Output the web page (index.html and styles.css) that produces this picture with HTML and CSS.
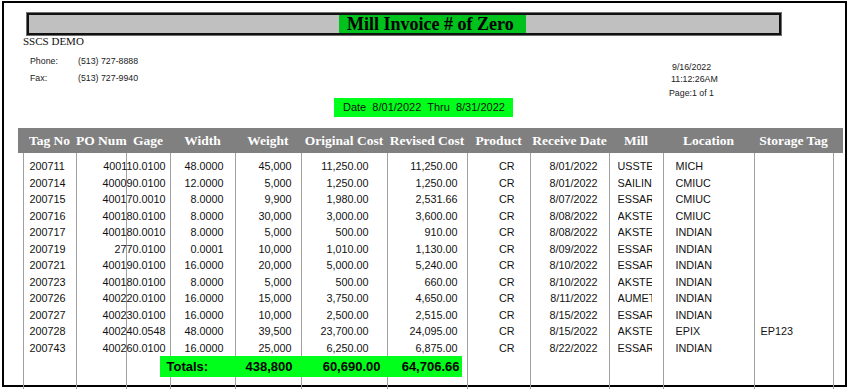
FILE: index.html
```html
<!DOCTYPE html>
<html lang="en">
<head>
    <meta charset="UTF-8">
    <meta name="viewport" content="width=device-width, initial-scale=1.0">
    <title>Mill Invoice</title>
    <link rel="stylesheet" href="styles.css">
</head>
<body>
    <div class="page">
        <div class="title-bar">
            <h1 class="title">Mill Invoice # of Zero</h1>
        </div>

        <div class="info">
            <div class="company">
                <div class="company-name">SSCS DEMO</div>
                <div class="contact">
                    <span>Phone:</span><span>(513) 727-8888</span>
                    <span>Fax:</span><span>(513) 727-9940</span>
                </div>
            </div>
            <div class="stamp">
                <div class="stamp-date">9/16/2022</div>
                <div class="stamp-time">11:12:26AM</div>
                <div class="stamp-page">Page:1 of 1</div>
            </div>
        </div>

        <div class="period">Date&nbsp; 8/01/2022&nbsp; Thru&nbsp; 8/31/2022</div>

        <table class="report">
            <colgroup>
                <col class="c-gutter-l">
                <col class="c-tag">
                <col class="c-po">
                <col class="c-gage">
                <col class="c-width">
                <col class="c-weight">
                <col class="c-orig">
                <col class="c-rev">
                <col class="c-prod">
                <col class="c-recv">
                <col class="c-mill">
                <col class="c-loc">
                <col class="c-store">
                <col class="c-gutter-r">
            </colgroup>
            <thead>
                <tr>
                    <th></th>
                    <th>Tag No</th>
                    <th>PO Num</th>
                    <th>Gage</th>
                    <th>Width</th>
                    <th>Weight</th>
                    <th>Original Cost</th>
                    <th>Revised Cost</th>
                    <th>Product</th>
                    <th>Receive Date</th>
                    <th>Mill</th>
                    <th>Location</th>
                    <th>Storage Tag</th>
                    <th></th>
                </tr>
            </thead>
            <tbody>
                <tr class="spacer">
                    <td class="gutter"></td><td></td><td></td><td></td><td></td><td></td><td></td><td></td><td></td><td></td><td></td><td></td><td></td><td class="gutter"></td>
                </tr>
                <tr>
                    <td class="gutter"></td>
                    <td class="tag">200711</td><td class="po"><span>40011</span></td><td class="gage">0.0100</td>
                    <td class="width">48.0000</td><td class="weight">45,000</td>
                    <td class="orig">11,250.00</td><td class="rev">11,250.00</td>
                    <td class="prod">CR</td><td class="recv">8/01/2022</td>
                    <td class="mill"><span>USSTE</span></td><td class="loc"><span>MICH</span></td>
                    <td class="store"></td>
                    <td class="gutter"></td>
                </tr>
                <tr>
                    <td class="gutter"></td>
                    <td class="tag">200714</td><td class="po"><span>40009</span></td><td class="gage">0.0100</td>
                    <td class="width">12.0000</td><td class="weight">5,000</td>
                    <td class="orig">1,250.00</td><td class="rev">1,250.00</td>
                    <td class="prod">CR</td><td class="recv">8/01/2022</td>
                    <td class="mill"><span>SAILIN</span></td><td class="loc"><span>CMIUC</span></td>
                    <td class="store"></td>
                    <td class="gutter"></td>
                </tr>
                <tr>
                    <td class="gutter"></td>
                    <td class="tag">200715</td><td class="po"><span>40017</span></td><td class="gage">0.0010</td>
                    <td class="width">8.0000</td><td class="weight">9,900</td>
                    <td class="orig">1,980.00</td><td class="rev">2,531.66</td>
                    <td class="prod">CR</td><td class="recv">8/07/2022</td>
                    <td class="mill"><span>ESSAR</span></td><td class="loc"><span>CMIUC</span></td>
                    <td class="store"></td>
                    <td class="gutter"></td>
                </tr>
                <tr>
                    <td class="gutter"></td>
                    <td class="tag">200716</td><td class="po"><span>40018</span></td><td class="gage">0.0100</td>
                    <td class="width">8.0000</td><td class="weight">30,000</td>
                    <td class="orig">3,000.00</td><td class="rev">3,600.00</td>
                    <td class="prod">CR</td><td class="recv">8/08/2022</td>
                    <td class="mill"><span>AKSTE</span></td><td class="loc"><span>CMIUC</span></td>
                    <td class="store"></td>
                    <td class="gutter"></td>
                </tr>
                <tr>
                    <td class="gutter"></td>
                    <td class="tag">200717</td><td class="po"><span>40018</span></td><td class="gage">0.0010</td>
                    <td class="width">8.0000</td><td class="weight">5,000</td>
                    <td class="orig">500.00</td><td class="rev">910.00</td>
                    <td class="prod">CR</td><td class="recv">8/08/2022</td>
                    <td class="mill"><span>AKSTE</span></td><td class="loc"><span>INDIAN</span></td>
                    <td class="store"></td>
                    <td class="gutter"></td>
                </tr>
                <tr>
                    <td class="gutter"></td>
                    <td class="tag">200719</td><td class="po"><span>277</span></td><td class="gage">0.0100</td>
                    <td class="width">0.0001</td><td class="weight">10,000</td>
                    <td class="orig">1,010.00</td><td class="rev">1,130.00</td>
                    <td class="prod">CR</td><td class="recv">8/09/2022</td>
                    <td class="mill"><span>ESSAR</span></td><td class="loc"><span>INDIAN</span></td>
                    <td class="store"></td>
                    <td class="gutter"></td>
                </tr>
                <tr>
                    <td class="gutter"></td>
                    <td class="tag">200721</td><td class="po"><span>40019</span></td><td class="gage">0.0100</td>
                    <td class="width">16.0000</td><td class="weight">20,000</td>
                    <td class="orig">5,000.00</td><td class="rev">5,240.00</td>
                    <td class="prod">CR</td><td class="recv">8/10/2022</td>
                    <td class="mill"><span>ESSAR</span></td><td class="loc"><span>INDIAN</span></td>
                    <td class="store"></td>
                    <td class="gutter"></td>
                </tr>
                <tr>
                    <td class="gutter"></td>
                    <td class="tag">200723</td><td class="po"><span>40018</span></td><td class="gage">0.0100</td>
                    <td class="width">8.0000</td><td class="weight">5,000</td>
                    <td class="orig">500.00</td><td class="rev">660.00</td>
                    <td class="prod">CR</td><td class="recv">8/10/2022</td>
                    <td class="mill"><span>AKSTE</span></td><td class="loc"><span>INDIAN</span></td>
                    <td class="store"></td>
                    <td class="gutter"></td>
                </tr>
                <tr>
                    <td class="gutter"></td>
                    <td class="tag">200726</td><td class="po"><span>40022</span></td><td class="gage">0.0100</td>
                    <td class="width">16.0000</td><td class="weight">15,000</td>
                    <td class="orig">3,750.00</td><td class="rev">4,650.00</td>
                    <td class="prod">CR</td><td class="recv">8/11/2022</td>
                    <td class="mill"><span>AUMET</span></td><td class="loc"><span>INDIAN</span></td>
                    <td class="store"></td>
                    <td class="gutter"></td>
                </tr>
                <tr>
                    <td class="gutter"></td>
                    <td class="tag">200727</td><td class="po"><span>40023</span></td><td class="gage">0.0100</td>
                    <td class="width">16.0000</td><td class="weight">10,000</td>
                    <td class="orig">2,500.00</td><td class="rev">2,515.00</td>
                    <td class="prod">CR</td><td class="recv">8/15/2022</td>
                    <td class="mill"><span>ESSAR</span></td><td class="loc"><span>INDIAN</span></td>
                    <td class="store"></td>
                    <td class="gutter"></td>
                </tr>
                <tr>
                    <td class="gutter"></td>
                    <td class="tag">200728</td><td class="po"><span>40024</span></td><td class="gage">0.0548</td>
                    <td class="width">48.0000</td><td class="weight">39,500</td>
                    <td class="orig">23,700.00</td><td class="rev">24,095.00</td>
                    <td class="prod">CR</td><td class="recv">8/15/2022</td>
                    <td class="mill"><span>AKSTE</span></td><td class="loc"><span>EPIX</span></td>
                    <td class="store">EP123</td>
                    <td class="gutter"></td>
                </tr>
                <tr>
                    <td class="gutter"></td>
                    <td class="tag">200743</td><td class="po"><span>40026</span></td><td class="gage">0.0100</td>
                    <td class="width">16.0000</td><td class="weight">25,000</td>
                    <td class="orig">6,250.00</td><td class="rev">6,875.00</td>
                    <td class="prod">CR</td><td class="recv">8/22/2022</td>
                    <td class="mill"><span>ESSAR</span></td><td class="loc"><span>INDIAN</span></td>
                    <td class="store"></td>
                    <td class="gutter"></td>
                </tr>
                <tr class="totals">
                    <td class="gutter"></td>
                    <td></td><td></td>
                    <td class="band-cell" colspan="5">
                        <div class="band">
                            <span class="band-label">Totals:</span>
                            <span>438,800</span>
                            <span>60,690.00</span>
                            <span>64,706.66</span>
                        </div>
                    </td>
                    <td></td><td></td><td></td><td></td><td></td>
                    <td class="gutter"></td>
                </tr>
                <tr class="filler">
                    <td class="gutter"></td><td></td><td></td><td></td><td></td><td></td><td></td><td></td><td></td><td></td><td></td><td></td><td></td><td class="gutter"></td>
                </tr>
            </tbody>
        </table>
    </div>
</body>
</html>
```

FILE: styles.css
```css
* {
    margin: 0;
    padding: 0;
    box-sizing: border-box;
}

html, body {
    overflow: hidden;
}

body {
    width: 850px;
    height: 389px;
    background: #ffffff;
    color: #111111;
    font-family: 'Liberation Sans', Arial, sans-serif;
}

.page {
    width: 845px;
    height: 386px;
    margin: 1px 3px 0 2px;
    border: 2px solid #000000;
}

/* title */

.title-bar {
    width: 754px;
    height: 22px;
    margin: 10px 0 0 23px;
    padding-left: 310px;
    background: #c0c0c0;
    border: 2px solid #111111;
    outline: 1px solid #6e6e6e;
}

.title {
    width: 187px;
    height: 18px;
    padding-left: 8px;
    background: #00c21c;
    color: #000000;
    font-family: 'Liberation Serif', 'Times New Roman', serif;
    font-size: 18px;
    font-weight: bold;
    line-height: 18px;
    white-space: nowrap;
}

/* header info */

.info {
    display: flex;
}

.company {
    flex: 1;
    padding-left: 19px;
}

.company-name {
    font-family: 'Liberation Serif', 'Times New Roman', serif;
    font-size: 11px;
    line-height: 13px;
}

.contact {
    display: grid;
    grid-template-columns: 48px auto;
    margin: 5px 0 0 7px;
    font-size: 8.8px;
    line-height: 16.6px;
    color: #222222;
}

.stamp {
    width: 100px;
    margin: 26px 76px 0 0;
    font-size: 8.8px;
    line-height: 12px;
    color: #222222;
}

.stamp-date {
    padding-left: 3px;
}

.stamp-time {
    padding-left: 2px;
}

.stamp-page {
    margin-top: 2px;
}

.period {
    width: 179px;
    height: 19px;
    margin: -1px 0 0 330px;
    padding-left: 9px;
    background: #00ff1a;
    font-size: 11px;
    line-height: 19px;
    white-space: nowrap;
}

/* table */

.report {
    width: 825px;
    margin: 11px 0 0 14px;
    border-collapse: collapse;
    table-layout: fixed;
}

.c-gutter-l { width: 5px; }
.c-tag { width: 53px; }
.c-po { width: 50px; }
.c-gage { width: 44px; }
.c-width { width: 65px; }
.c-weight { width: 66px; }
.c-orig { width: 86px; }
.c-rev { width: 80px; }
.c-prod { width: 63px; }
.c-recv { width: 79px; }
.c-mill { width: 54px; }
.c-loc { width: 91px; }
.c-store { width: 79px; }
.c-gutter-r { width: 10px; }

.report th {
    height: 25px;
    padding: 0;
    background: #808080;
    color: #ffffff;
    font-family: 'Liberation Serif', 'Times New Roman', serif;
    font-size: 13.5px;
    font-weight: bold;
    text-align: center;
    white-space: nowrap;
}

.report td {
    height: 16.5px;
    padding: 0;
    border-left: 1px solid #a0a0a0;
    border-right: 1px solid #a0a0a0;
    font-size: 10.8px;
    line-height: 16.5px;
    white-space: nowrap;
    vertical-align: middle;
}

.report td.gutter {
    border: none;
}

.report .spacer td {
    height: 5px;
    line-height: 0;
}

.report .filler td {
    height: 20px;
}

.tag { padding-left: 6px !important; }
.po { text-align: right; }
.gage { text-align: right; padding-right: 4px !important; }
.width { text-align: right; padding-right: 11px !important; }
.weight { text-align: right; padding-right: 9px !important; }
.orig { text-align: right; padding-right: 18px !important; }
.rev { text-align: right; padding-right: 9px !important; }
.prod { text-align: right; padding-right: 15px !important; }
.recv { text-align: right; padding-right: 11px !important; }
.mill { padding-left: 8px !important; }
.loc { padding-left: 12px !important; }
.store { padding-left: 6px !important; }

/* PO number runs into the gage column, as in the printed report */
.po span {
    margin-right: -7px;
}

.mill span,
.loc span {
    display: inline-block;
    overflow: hidden;
    vertical-align: top;
}

.mill span {
    width: 34px;
}

.loc span {
    width: 36px;
}

/* totals */

.report .totals td {
    height: 21px;
}

.report td.band-cell {
    padding: 0 5px 0 33px;
}

.band {
    display: grid;
    grid-template-columns: 76px 66px 86px 75px;
    height: 21px;
    background: #00ff1a;
    color: #000000;
    font-size: 13px;
    font-weight: bold;
    line-height: 21px;
    text-align: right;
}

.band span:nth-child(2) { padding-right: 9px; }
.band span:nth-child(3) { padding-right: 7px; }
.band span:nth-child(4) { padding-right: 3px; }

.band .band-label {
    padding-left: 7px;
    text-align: left;
}
```
